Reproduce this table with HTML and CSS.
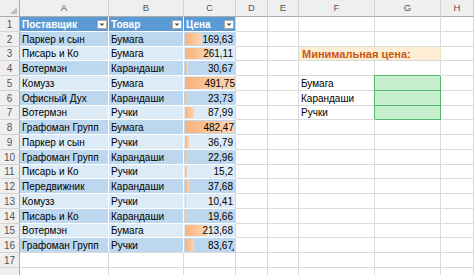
FILE: index.html
```html
<!DOCTYPE html>
<html lang="ru">
<head>
<meta charset="utf-8">
<title>Минимальная цена</title>
<link rel="stylesheet" href="styles.css">
</head>
<body>
<div class="sheet">
  <!-- column headers -->
  <div class="corner"><svg class="corner-mark" width="7" height="7" viewBox="0 0 7 7"><path d="M7 0 V7 H0 Z" fill="#bfbfbf"/></svg></div>
  <div class="colhead">A</div>
  <div class="colhead">B</div>
  <div class="colhead">C</div>
  <div class="colhead">D</div>
  <div class="colhead">E</div>
  <div class="colhead">F</div>
  <div class="colhead">G</div>
  <div class="colhead">H</div>

  <!-- 1 -->
  <div class="rownum">1</div>
  <div class="c t th">Поставщик<span class="filter"><svg width="8" height="7" viewBox="0 0 8 7"><path d="M1.5 2.5 H6.5 L4 5 Z" fill="#505050"/></svg></span></div>
  <div class="c t th">Товар<span class="filter"><svg width="8" height="7" viewBox="0 0 8 7"><path d="M1.5 2.5 H6.5 L4 5 Z" fill="#505050"/></svg></span></div>
  <div class="c t th last">Цена<span class="filter"><svg width="8" height="7" viewBox="0 0 8 7"><path d="M1.5 2.5 H6.5 L4 5 Z" fill="#505050"/></svg></span></div>
  <div class="c"></div><div class="c"></div><div class="c"></div><div class="c"></div><div class="c"></div>

  <!-- 2 -->
  <div class="rownum">2</div>
  <div class="c t b1">Паркер и сын</div>
  <div class="c t b1">Бумага</div>
  <div class="c t b1 last num"><span class="bar" style="width:17.2px"></span><span class="val">169,63</span></div>
  <div class="c"></div><div class="c"></div><div class="c"></div><div class="c"></div><div class="c"></div>

  <!-- 3 -->
  <div class="rownum">3</div>
  <div class="c t b2">Писарь и Ко</div>
  <div class="c t b2">Бумага</div>
  <div class="c t b2 last num"><span class="bar" style="width:26.5px"></span><span class="val">261,11</span></div>
  <div class="c"></div><div class="c"></div>
  <div class="c title">Минимальная цена:</div>
  <div class="c"></div>

  <!-- 4 -->
  <div class="rownum">4</div>
  <div class="c t b1">Вотермэн</div>
  <div class="c t b1">Карандаши</div>
  <div class="c t b1 last num"><span class="bar" style="width:3.1px"></span><span class="val">30,67</span></div>
  <div class="c"></div><div class="c"></div><div class="c"></div><div class="c"></div><div class="c"></div>

  <!-- 5 -->
  <div class="rownum">5</div>
  <div class="c t b2">Комузз</div>
  <div class="c t b2">Бумага</div>
  <div class="c t b2 last num"><span class="bar" style="width:50px"></span><span class="val">491,75</span></div>
  <div class="c"></div><div class="c"></div>
  <div class="c">Бумага</div>
  <div class="c result"></div>
  <div class="c"></div>

  <!-- 6 -->
  <div class="rownum">6</div>
  <div class="c t b1">Офисный Дух</div>
  <div class="c t b1">Карандаши</div>
  <div class="c t b1 last num"><span class="bar" style="width:2.4px"></span><span class="val">23,73</span></div>
  <div class="c"></div><div class="c"></div>
  <div class="c">Карандаши</div>
  <div class="c result"></div>
  <div class="c"></div>

  <!-- 7 -->
  <div class="rownum">7</div>
  <div class="c t b2">Вотермэн</div>
  <div class="c t b2">Ручки</div>
  <div class="c t b2 last num"><span class="bar" style="width:8.9px"></span><span class="val">87,99</span></div>
  <div class="c"></div><div class="c"></div>
  <div class="c">Ручки</div>
  <div class="c result"></div>
  <div class="c"></div>

  <!-- 8 -->
  <div class="rownum">8</div>
  <div class="c t b1">Графоман Групп</div>
  <div class="c t b1">Бумага</div>
  <div class="c t b1 last num"><span class="bar" style="width:49px"></span><span class="val">482,47</span></div>
  <div class="c"></div><div class="c"></div><div class="c"></div><div class="c"></div><div class="c"></div>

  <!-- 9 -->
  <div class="rownum">9</div>
  <div class="c t b2">Паркер и сын</div>
  <div class="c t b2">Ручки</div>
  <div class="c t b2 last num"><span class="bar" style="width:3.7px"></span><span class="val">36,79</span></div>
  <div class="c"></div><div class="c"></div><div class="c"></div><div class="c"></div><div class="c"></div>

  <!-- 10 -->
  <div class="rownum">10</div>
  <div class="c t b1">Графоман Групп</div>
  <div class="c t b1">Карандаши</div>
  <div class="c t b1 last num"><span class="bar" style="width:2.3px"></span><span class="val">22,96</span></div>
  <div class="c"></div><div class="c"></div><div class="c"></div><div class="c"></div><div class="c"></div>

  <!-- 11 -->
  <div class="rownum">11</div>
  <div class="c t b2">Писарь и Ко</div>
  <div class="c t b2">Ручки</div>
  <div class="c t b2 last num"><span class="bar" style="width:1.5px"></span><span class="val">15,2</span></div>
  <div class="c"></div><div class="c"></div><div class="c"></div><div class="c"></div><div class="c"></div>

  <!-- 12 -->
  <div class="rownum">12</div>
  <div class="c t b1">Передвижник</div>
  <div class="c t b1">Карандаши</div>
  <div class="c t b1 last num"><span class="bar" style="width:3.8px"></span><span class="val">37,68</span></div>
  <div class="c"></div><div class="c"></div><div class="c"></div><div class="c"></div><div class="c"></div>

  <!-- 13 -->
  <div class="rownum">13</div>
  <div class="c t b2">Комузз</div>
  <div class="c t b2">Ручки</div>
  <div class="c t b2 last num"><span class="bar" style="width:1.1px"></span><span class="val">10,41</span></div>
  <div class="c"></div><div class="c"></div><div class="c"></div><div class="c"></div><div class="c"></div>

  <!-- 14 -->
  <div class="rownum">14</div>
  <div class="c t b1">Писарь и Ко</div>
  <div class="c t b1">Карандаши</div>
  <div class="c t b1 last num"><span class="bar" style="width:2px"></span><span class="val">19,66</span></div>
  <div class="c"></div><div class="c"></div><div class="c"></div><div class="c"></div><div class="c"></div>

  <!-- 15 -->
  <div class="rownum">15</div>
  <div class="c t b2">Вотермэн</div>
  <div class="c t b2">Бумага</div>
  <div class="c t b2 last num"><span class="bar" style="width:21.7px"></span><span class="val">213,68</span></div>
  <div class="c"></div><div class="c"></div><div class="c"></div><div class="c"></div><div class="c"></div>

  <!-- 16 -->
  <div class="rownum">16</div>
  <div class="c t b1 end">Графоман Групп</div>
  <div class="c t b1 end">Ручки</div>
  <div class="c t b1 last end num"><span class="bar" style="width:8.5px"></span><span class="val">83,67</span><span class="resize"></span></div>
  <div class="c"></div><div class="c"></div><div class="c"></div><div class="c"></div><div class="c"></div>

  <!-- 17 -->
  <div class="rownum">17</div>
  <div class="c"></div><div class="c"></div><div class="c"></div><div class="c"></div><div class="c"></div><div class="c"></div><div class="c"></div><div class="c"></div>

  <!-- next row, only its top edge shows -->
  <div class="rownum"></div>
  <div class="c"></div><div class="c"></div><div class="c"></div><div class="c"></div><div class="c"></div><div class="c"></div><div class="c"></div><div class="c"></div>
</div>
</body>
</html>
```

FILE: styles.css
```css
html, body {
  margin: 0;
  background: #ffffff;
}

body {
  font-family: "Liberation Sans", Arial, sans-serif;
  font-size: 10px;
  color: #000000;
  overflow: hidden;
}

.sheet {
  display: grid;
  grid-template-columns: 20px 89px 75px 52px 32px 31px 76px 66px minmax(0, 1fr);
  grid-template-rows: 17px;
  grid-auto-rows: 14.75px;
  width: 100%;
  overflow: hidden;
}

/* headers */
.corner,
.colhead,
.rownum {
  box-sizing: border-box;
  background: #efefef;
  border-right: 1px solid #d4d4d4;
  border-bottom: 1px solid #d4d4d4;
  color: #555555;
}

.corner {
  display: flex;
  align-items: flex-end;
  justify-content: flex-end;
  padding: 0 2px 2px 0;
  border-bottom-color: #ababab;
  border-right-color: #ababab;
}

.colhead {
  display: flex;
  align-items: center;
  justify-content: center;
  font-size: 9.5px;
  padding-bottom: 1px;
  border-bottom-color: #ababab;
}

.rownum {
  display: flex;
  align-items: flex-end;
  justify-content: center;
  font-size: 10px;
  line-height: 12px;
  border-right-color: #ababab;
}

/* cells */
.c {
  box-sizing: border-box;
  display: flex;
  align-items: flex-end;
  min-width: 0;
  padding: 0 2px;
  line-height: 12px;
  white-space: nowrap;
  border-right: 1px solid #dadada;
  border-bottom: 1px solid #dadada;
}

/* table body */
.t {
  border-right-color: #ffffff;
  border-bottom-color: #ffffff;
}

.t.last {
  border-right-color: #d0d7e0;
}

.t.end {
  border-bottom-color: #dadada;
}

.b1 {
  background: #bdd7ee;
}

.b2 {
  background: #ddebf7;
}

.th {
  background: #5b9bd5;
  color: #ffffff;
  font-weight: bold;
  padding-right: 1px;
}

.filter {
  box-sizing: border-box;
  display: flex;
  align-items: center;
  justify-content: center;
  width: 10px;
  height: 9px;
  margin-left: auto;
  align-self: center;
  margin-top: 1px;
  background: #ffffff;
  border: 1px solid #a9a9a9;
}

/* price column with data bars */
.num {
  display: grid;
  padding: 1px 2px 0 1px;
}

.num > .bar,
.num > .val {
  grid-area: 1 / 1;
}

.bar {
  align-self: stretch;
  margin-bottom: 1px;
  background: linear-gradient(90deg, #f8b27c 0%, #fbc89d 60%, #fcd6b6 100%);
}

.val {
  justify-self: end;
  align-self: end;
}

.end.num {
  position: relative;
}

.resize {
  position: absolute;
  right: 1px;
  bottom: 1px;
  width: 0;
  height: 0;
  border-left: 3px solid transparent;
  border-bottom: 3px solid #3a6fa8;
}

/* summary block */
.title {
  grid-column: span 2;
  background: #fdedd5;
  color: #c65a11;
  font-weight: bold;
  font-size: 11px;
  padding-left: 3px;
  border-right-color: #f4e2c8;
}

.result {
  background: #c6efce;
  border-right-color: #56b56f;
  border-bottom-color: #56b56f;
  box-shadow: -1px -1px 0 #56b56f;
}
```
